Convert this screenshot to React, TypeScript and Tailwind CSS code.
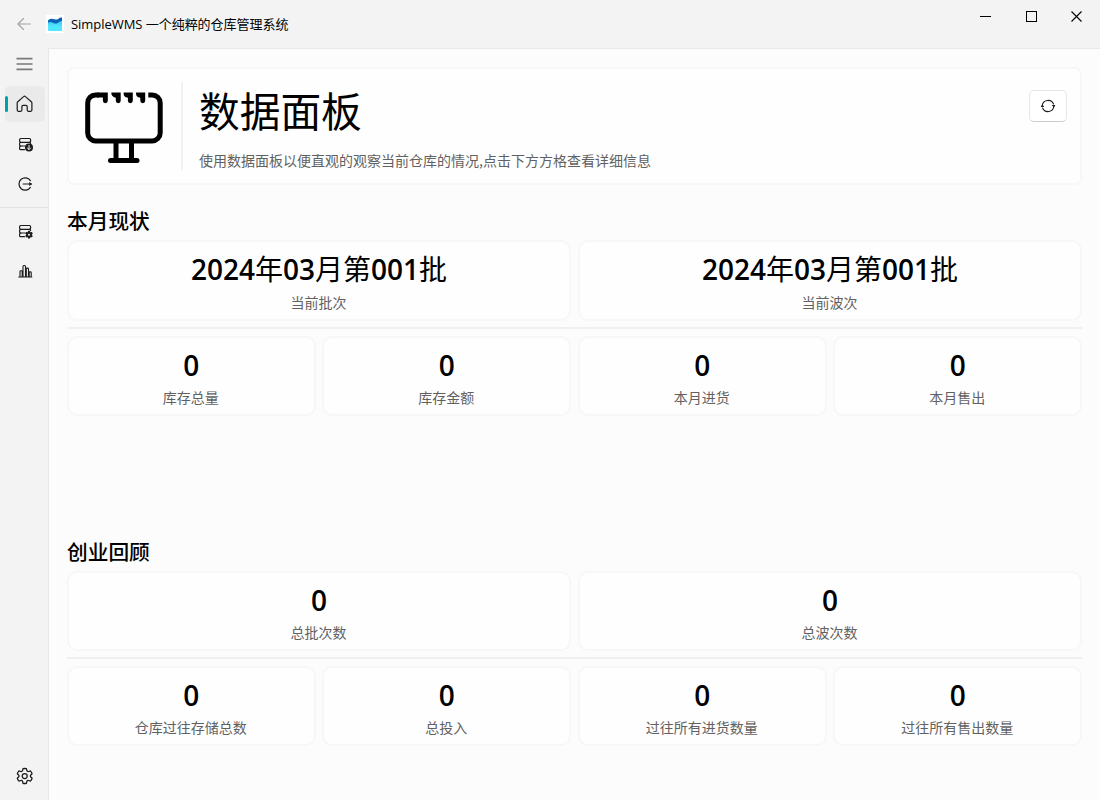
import React from "react";

function Icon({ size = 16, sw = 1.2, className = "", children }: { size?: number; sw?: number; className?: string; children: React.ReactNode }) {
  return (
    <svg
      width={size}
      height={size}
      viewBox={`0 0 ${size} ${size}`}
      fill="none"
      stroke="currentColor"
      strokeWidth={sw}
      strokeLinecap="round"
      strokeLinejoin="round"
      className={`block shrink-0 ${className}`}
    >
      {children}
    </svg>
  );
}

const Database = () => (
  <>
    <rect x="2.600" y="2.500" width="11" height="3.800" rx="1.200" />
    <path d="M3.800 6.300c-.8 0-1.200.5-1.200 1.200v1.200c0 .8.500 1.300 1.200 1.300h4.200M12.400 6.300c.8 0 1.200.5 1.200 1.200" />
    <path d="M3.800 10c-.8 0-1.200.5-1.200 1.200v1.200c0 .8.500 1.300 1.200 1.300h3.700" />
  </>
);

const HomeIcon = () => (
  <Icon size={18}>
    <path d="M1.200 8.100c0-.5.2-1 .6-1.400L7.600 1.600c.5-.5 1.300-.5 1.800 0l5.900 5.100c.4.4.6.9.6 1.400v7c0 .7-.5 1.200-1.200 1.200h-2.300c-.7 0-1.200-.5-1.200-1.200v-3.500c0-.7-.5-1.200-1.200-1.200H7.100c-.7 0-1.200.5-1.200 1.200v3.500c0 .7-.5 1.200-1.200 1.200H2.400c-.7 0-1.200-.5-1.200-1.200z" />
  </Icon>
);

const StockInIcon = () => (
  <Icon size={16}>
    <Database />
    <circle cx="12" cy="11.600" r="4" fill="currentColor" stroke="none" />
    <path d="M12 9.400v4M10.400 12l1.600 1.600 1.600-1.600" stroke="#f3f3f3" strokeWidth="1" />
  </Icon>
);

const ExitIcon = () => (
  <Icon size={16} sw={1.2}>
    <path d="M13.400 4.600A6.200 6.200 0 1 0 13.400 11.400M6.200 8h8.400" />
    <path d="M12.200 6L15 8l-2.800 2z" fill="currentColor" stroke="none" />
  </Icon>
);

const StockGearIcon = () => (
  <Icon size={16}>
    <Database />
    <g stroke="none" fill="currentColor">
      <rect x="10.900" y="7.800" width="2.200" height="7.800" rx=".6" />
      <rect x="10.900" y="7.800" width="2.200" height="7.800" rx=".6" transform="rotate(60 12 11.700)" />
      <rect x="10.900" y="7.800" width="2.200" height="7.800" rx=".6" transform="rotate(120 12 11.700)" />
      <circle cx="12" cy="11.700" r="2.800" />
    </g>
    <circle cx="12" cy="11.700" r="1" fill="#f3f3f3" stroke="none" />
  </Icon>
);

const ChartIcon = () => (
  <Icon size={16} sw={1.1}>
    <path d="M1.800 14h13M3 13.900V8.500c0-.5.3-.8.700-.8h.8c.4 0 .7.3.7.8v5.400M6 13.900V3.500c0-.6.4-1 .9-1h.7c.5 0 .9.4.9 1v10.400M9.300 13.900V6c0-.6.3-.9.800-.9h.6c.5 0 .8.3.8.9v7.900M12.200 13.900V9.700c0-.5.3-.8.7-.8h.5c.5 0 .8.3.8.8v4.200" />
  </Icon>
);

const SettingsIcon = () => (
  <Icon size={18} sw={1.25}>
    <circle cx="8.700" cy="9" r="2.500" />
    <path transform="translate(-.3 0)" d="M7.300 1.700Q9 1.300 10.700 1.700L11.200 3.800Q11.700 4.800 12.900 4.500L14.700 3.900Q15.900 5.100 16.400 6.800L14.900 8.200Q14.200 9 14.900 9.800L16.400 11.200Q15.900 12.900 14.700 14.100L12.900 13.500Q11.700 13.200 11.200 14.200L10.700 16.300Q9 16.700 7.300 16.300L6.800 14.200Q6.300 13.200 5.100 13.500L3.300 14.100Q2.100 12.900 1.600 11.200L3.100 9.800Q3.800 9 3.100 8.200L1.600 6.800Q2.100 5.100 3.300 3.900L5.100 4.500Q6.300 4.800 6.800 3.800Z" />
  </Icon>
);

const RefreshIcon = () => (
  <Icon size={16} sw={1.1}>
    <path d="M2.200 7.700A5.900 5.900 0 0 1 13.500 6M13.900 8.300A5.900 5.900 0 0 1 2.600 10" />
    <path d="M.6 9L2.300 6.400 4.300 9zM11.800 7h3.600l-1.700 2.600z" fill="currentColor" stroke="none" />
  </Icon>
);

function LogoIcon() {
  return (
    <svg width="18" height="18" viewBox="0 0 18 18" className="block shrink-0 bg-white">
      <defs>
        <linearGradient id="logo-sea" x1="0" y1="0" x2="0" y2="1">
          <stop offset="0" stopColor="#35c1f1" />
          <stop offset=".6" stopColor="#50e6ff" />
        </linearGradient>
      </defs>
      <path d="M2 5h14v10a1 1 0 0 1-1 1H3a1 1 0 0 1-1-1z" fill="url(#logo-sea)" />
      <path d="M2 6.500C2 4.500 3.500 3.700 5.500 3.700c2.500 0 3.500.8 5 .8 2 0 2.500-2 4.500-2h1V6c-3 0-3.500 2.600-6.500 2.600C7 8.600 6.500 7 4.500 7 3.200 7 2.500 7.600 2 8z" fill="#0a63b5" />
    </svg>
  );
}

function MonitorIcon() {
  return (
    <svg width="78" height="72" viewBox="0 0 78 72" fill="none" stroke="#000" className="block shrink-0">
      <path d="M14 2.900H10.500A8 8 0 0 0 2.700 10.900v30A8 8 0 0 0 10.500 48.900h56.700a8 8 0 0 0 8-8v-30a8 8 0 0 0-8-8H63.300" strokeWidth="5" />
      <path d="M31 50v17M46.500 50v17" strokeWidth="5" />
      <path d="M25.500 68.500h26.500" strokeWidth="5" strokeLinecap="round" />
      <g fill="#000" stroke="none">
        <path d="M12 .4h10.800v8.400a2.400 2.400 0 0 1-4.900 0V5.400H12z" />
        <path d="M26.300 .4h9.400v8.400a2.400 2.400 0 0 1-4.900 0V5.700A5 5 0 0 1 26.300 .4z" />
        <path d="M38.600 .4h9.200v8.400a2.400 2.400 0 0 1-4.900 0V5.700A5 5 0 0 1 38.600 .4z" />
        <path d="M51 .4h9.200v8.400a2.400 2.400 0 0 1-4.900 0V5.700A5 5 0 0 1 51 .4z" />
      </g>
    </svg>
  );
}

function NavButton({ active = false, children }: { active?: boolean; children: React.ReactNode }) {
  return (
    <div className={`relative ml-[5px] flex h-9 w-10 items-center justify-center rounded-[5px] ${active ? "bg-[#eaeaea]" : ""}`}>
      {active && <span className="absolute left-0 top-[10px] h-4 w-[3px] rounded-full bg-[#00a0aa]" />}
      {children}
    </div>
  );
}

function StatCard({ value, label, tall = false }: { value: string; label: string; tall?: boolean }) {
  const parts = value.split(/(\d+)/).filter(Boolean);
  return (
    <div className={`flex min-w-0 flex-1 flex-col items-center rounded-[10px] border-2 border-[#f7f7f7] bg-[#fefefe] pt-[8px] ${tall ? "h-[81px]" : "h-20"}`}>
      <div className="flex h-[38px] items-center whitespace-nowrap text-[28px] leading-[38px] text-black">
        {parts.map((p, i) =>
          /\d/.test(p) ? (
            <span key={i} className="font-['Open_Sans','Noto_Sans',sans-serif] font-semibold">{p}</span>
          ) : (
            <span key={i} className="-mt-[2px] font-['Noto_Sans_CJK_SC',sans-serif] font-normal">{p}</span>
          ),
        )}
      </div>
      <div className={`h-5 whitespace-nowrap pr-px text-[14px] leading-5 text-[#616161] ${tall ? "mt-[4px]" : "mt-[3px]"}`}>{label}</div>
    </div>
  );
}

type Stat = [string, string];

function Section({ title, top, bottom, tall = false }: { title: string; top: Stat[]; bottom: Stat[]; tall?: boolean }) {
  return (
    <section>
      <h2 className="h-[30px] text-[20.700px] font-medium leading-[30px] text-black">{title}</h2>
      <div className="mt-[5px] flex gap-[6.900px]">
        {top.map(([v, l]) => <StatCard key={l} value={v} label={l} tall={tall} />)}
      </div>
      <div className="mb-[7px] mt-[6px] h-[2px] bg-[#f0f0f0]" />
      <div className="flex gap-[6.900px]">
        {bottom.map(([v, l]) => <StatCard key={l} value={v} label={l} />)}
      </div>
    </section>
  );
}

export default function App() {
  return (
    <div className="flex h-[800px] w-[1100px] flex-col overflow-hidden bg-[#f3f3f3] font-['Noto_Sans_CJK_SC',sans-serif] text-[#1b1b1b]">
      <header className="flex h-12 shrink-0">
        <div className="flex flex-1 items-center pl-[17px]">
          <Icon size={14} sw={1.1} className="text-[#a3a3a3]">
            <path d="M1 7h12.500M6.500 1.500L1 7l5.500 5.500" />
          </Icon>
          <div className="ml-[15px]"><LogoIcon /></div>
          <div className="ml-[7px] whitespace-nowrap font-['Open_Sans','Noto_Sans_CJK_SC',sans-serif] text-[13px] leading-5 tracking-[-0.04px] text-black">
            SimpleWMS 一个纯粹的仓库管理系统
          </div>
        </div>
        <div className="flex h-[33px] items-center gap-[34px] pr-[16px] text-black">
          <svg width="12" height="12" className="block" shapeRendering="crispEdges"><path d="M0 5.500h11" stroke="currentColor" /></svg>
          <svg width="12" height="12" className="block" shapeRendering="crispEdges"><rect x=".5" y=".5" width="10" height="10" fill="none" stroke="currentColor" /></svg>
          <svg width="12" height="12" className="block overflow-visible"><path d="M-.5 .5l10 10M9.500 .5l-10 10" stroke="currentColor" strokeWidth="1.100" /></svg>
        </div>
      </header>

      <div className="flex min-h-0 flex-1">
        <nav className="flex w-12 shrink-0 flex-col">
          <div className="flex h-[38px] items-start pl-4 pt-2">
            <svg width="17" height="16" className="block text-[#7a7a7a]">
              <path d="M.5 2.700h16M.5 8h16M.5 13.300h16" stroke="currentColor" strokeWidth="1.700" />
            </svg>
          </div>
          <div className="flex flex-col gap-1">
            <NavButton active><HomeIcon /></NavButton>
            <NavButton><StockInIcon /></NavButton>
            <NavButton><ExitIcon /></NavButton>
          </div>
          <div className="mb-[5px] mt-[5px] h-px bg-[#e2e2e2]" />
          <div className="flex flex-col gap-1">
            <NavButton><StockGearIcon /></NavButton>
            <NavButton><ChartIcon /></NavButton>
          </div>
          <div className="mb-[6px] mt-auto"><NavButton><SettingsIcon /></NavButton></div>
        </nav>

        <main className="min-w-0 flex-1 border-l border-t border-[#e8e8e8] bg-[#fcfcfc] pl-[18px] pr-[18px] pt-[18px]">
          <div className="flex h-[118px] rounded-[7px] border-2 border-[#f7f7f7] bg-[#fefefe]">
            <div className="pl-[16px] pt-[23px]"><MonitorIcon /></div>
            <div className="ml-[18px] mt-[13px] h-[88px] w-[2px] shrink-0 bg-[#f1f1f1]" />
            <div className="ml-[16px] flex-1 whitespace-nowrap pt-[11px]">
              <h1 className="h-[60px] text-[40.700px] font-normal leading-[60px] text-black">数据面板</h1>
              <p className="mt-[10px] text-[14px] leading-5 text-[#616161]">使用数据面板以便直观的观察当前仓库的情况,点击下方方格查看详细信息</p>
            </div>
            <button className="mr-[13px] mt-[21px] flex h-8 w-[38px] items-center justify-center rounded-[5px] border border-[#e6e6e6] border-b-[#cccccc] bg-white">
              <RefreshIcon />
            </button>
          </div>

          <div className="mt-[20px]">
            <Section
              tall
              title="本月现状"
              top={[["2024年03月第001批", "当前批次"], ["2024年03月第001批", "当前波次"]]}
              bottom={[["0", "库存总量"], ["0", "库存金额"], ["0", "本月进货"], ["0", "本月售出"]]}
            />
          </div>
          <div className="mt-[120px]">
            <Section
              title="创业回顾"
              top={[["0", "总批次数"], ["0", "总波次数"]]}
              bottom={[["0", "仓库过往存储总数"], ["0", "总投入"], ["0", "过往所有进货数量"], ["0", "过往所有售出数量"]]}
            />
          </div>
        </main>
      </div>
    </div>
  );
}
